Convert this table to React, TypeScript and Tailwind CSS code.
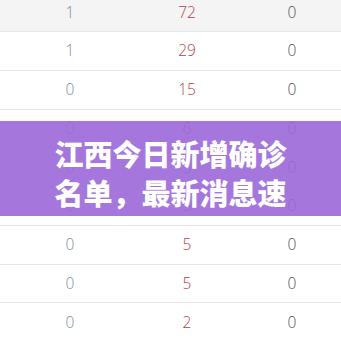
import React from "react";

type Row = [string, string, string];

const rows: Row[] = [
  ["1", "72", "0"],
  ["1", "29", "0"],
  ["0", "15", "0"],
  ["0", "6", "0"],
  ["0", "5", "0"],
  ["0", "5", "0"],
  ["0", "5", "0"],
  ["0", "5", "0"],
  ["0", "2", "0"],
];

function TableRow({row, striped}: {row: Row; striped: boolean}) {
  return (
    <div
      className={`grid h-[38.75px] shrink-0 grid-cols-[140px_94px_116px] items-center border-b border-[#e6e7e8] text-[15.5px] font-light ${
        striped ? "bg-[#f3f4f3]" : "bg-white"
      }`}
    >
      <span className="text-center text-[#7a8a9f]">{row[0]}</span>
      <span className="text-center text-[#b23f48]">{row[1]}</span>
      <span className="text-center text-[#4f4f4f]">{row[2]}</span>
    </div>
  );
}

export default function App() {
  return (
    <div
      className="relative h-[341px] w-[341px] overflow-hidden bg-white"
      style={{fontFamily: '"Open Sans", "Liberation Sans", sans-serif'}}
    >
      <div className="-mt-[6.75px] flex flex-col">
        {rows.map((r, i) => (
          <TableRow key={i} row={r} striped={i === 0} />
        ))}
      </div>

      <div className="absolute left-0 right-0 top-[121px] flex h-[95px] flex-col items-center justify-center bg-[#9b68d9]/90 pt-[8px]">
        <p
          className="text-center text-[29px] font-black leading-[39px] text-white"
          style={{fontFamily: '"Noto Sans CJK SC", "Noto Sans", sans-serif'}}
        >
          江西今日新增确诊
          <br />
          名单，最新消息速
        </p>
      </div>
    </div>
  );
}
